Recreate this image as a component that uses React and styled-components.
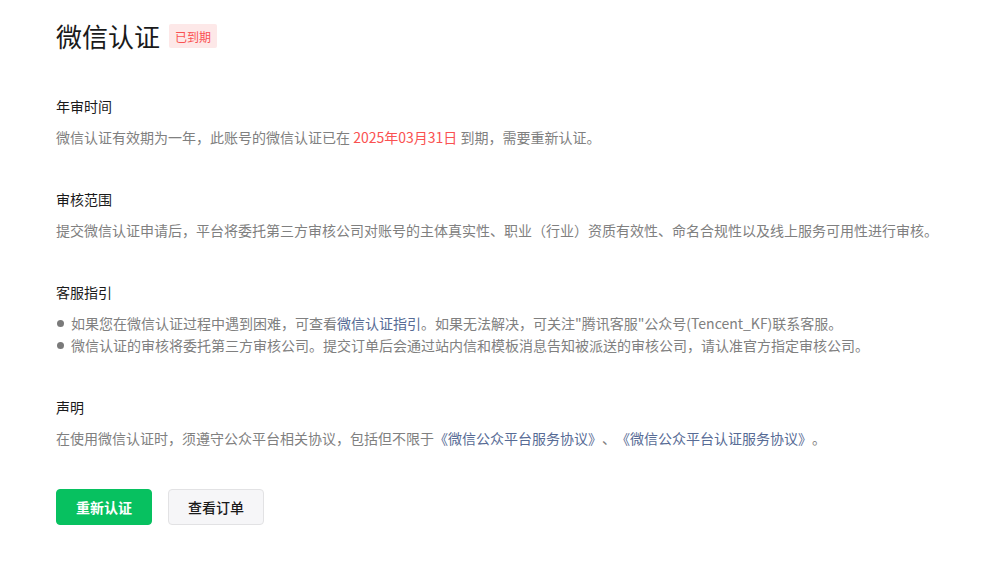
import React from "react";
import styled, { createGlobalStyle } from "styled-components";

const Global = createGlobalStyle`
  html, body { margin: 0; padding: 0; background: #fff; }
  body {
    font-family: "Noto Sans CJK SC", "Noto Sans", sans-serif;
    -webkit-font-smoothing: antialiased;
    text-spacing-trim: space-all;
  }
`;

const Page = styled.div`
  padding: 16px 0 40px 56px;
  display: flex;
  flex-direction: column;
  gap: 40px;
`;

const TitleRow = styled.div`
  display: flex;
  align-items: center;
  gap: 9px;
  margin-bottom: -1px;
`;

const Title = styled.h1`
  margin: 0;
  font-size: 26px;
  line-height: 40px;
  font-weight: 400;
  color: #1a1a1a;
`;

const Badge = styled.span`
  display: inline-flex;
  align-items: center;
  height: 24px;
  padding: 0 6px;
  border-radius: 2px;
  background: #fde8e8;
  color: #fa5151;
  font-size: 12px;
`;

const Section = styled.section`
  display: flex;
  flex-direction: column;
  gap: 9px;
`;

const Heading = styled.h2`
  margin: 0;
  font-size: 14px;
  line-height: 22px;
  font-weight: 400;
  color: #1a1a1a;
`;

const Text = styled.p`
  margin: 0;
  font-size: 14px;
  line-height: 22px;
  color: #808080;
  white-space: nowrap;
`;

const Red = styled.span`
  color: #fa5151;
`;

const Link = styled.a`
  color: #576b95;
  text-decoration: none;
  cursor: pointer;
`;

const List = styled.ul`
  margin: 0;
  padding: 0;
  list-style: none;
`;

const Item = styled.li`
  font-size: 14px;
  line-height: 22px;
  color: #808080;
  display: flex;
  align-items: center;
  white-space: nowrap;
  &::before {
    content: "";
    width: 7px;
    height: 7px;
    border-radius: 50%;
    background: #7a7a7a;
    margin: 0 7px 0 1px;
    flex-shrink: 0;
  }
`;

const Actions = styled.div`
  display: flex;
  gap: 16px;
`;

const Button = styled.button`
  width: 96px;
  height: 36px;
  border-radius: 4px;
  font-family: inherit;
  font-size: 14px;
  font-weight: ${(p) => (p.$primary ? 700 : 500)};
  cursor: pointer;
  border: 1px solid ${(p) => (p.$primary ? "#07c160" : "#e2e2e4")};
  background: ${(p) => (p.$primary ? "#07c160" : "#f6f6f8")};
  color: ${(p) => (p.$primary ? "#fff" : "#1a1a1a")};
`;

export default function App() {
  return (
    <>
      <Global />
      <Page>
        <TitleRow>
          <Title>微信认证</Title>
          <Badge>已到期</Badge>
        </TitleRow>
        <Section>
          <Heading>年审时间</Heading>
          <Text>
            微信认证有效期为一年，此账号的微信认证已在 <Red>2025年03月31日</Red> 到期，需要重新认证。
          </Text>
        </Section>
        <Section>
          <Heading>审核范围</Heading>
          <Text>
            提交微信认证申请后，平台将委托第三方审核公司对账号的主体真实性、职业（行业）资质有效性、命名合规性以及线上服务可用性进行审核。
          </Text>
        </Section>
        <Section>
          <Heading>客服指引</Heading>
          <List>
            <Item>
              <span>
                如果您在微信认证过程中遇到困难，可查看<Link>微信认证指引</Link>。如果无法解决，可关注"腾讯客服"公众号(Tencent_KF)联系客服。
              </span>
            </Item>
            <Item>
              <span>
                微信认证的审核将委托第三方审核公司。提交订单后会通过站内信和模板消息告知被派送的审核公司，请认准官方指定审核公司。
              </span>
            </Item>
          </List>
        </Section>
        <Section>
          <Heading>声明</Heading>
          <Text>
            在使用微信认证时，须遵守公众平台相关协议，包括但不限于<Link>《微信公众平台服务协议》</Link>、<Link>《微信公众平台认证服务协议》</Link>。
          </Text>
        </Section>
        <Actions>
          <Button $primary>重新认证</Button>
          <Button>查看订单</Button>
        </Actions>
      </Page>
    </>
  );
}
